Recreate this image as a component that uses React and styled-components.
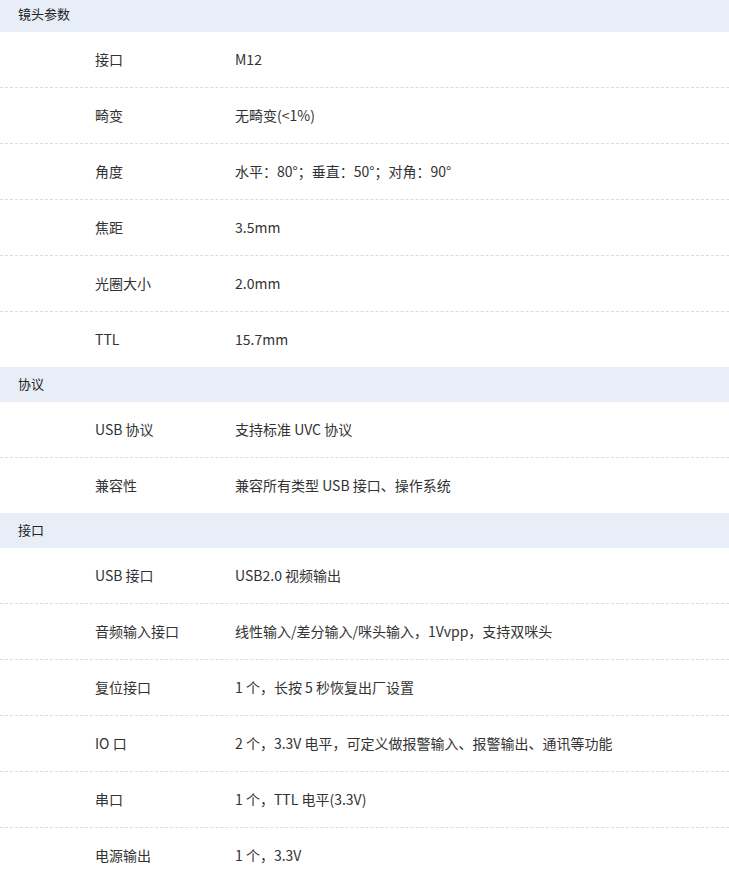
import React from "react";
import styled, { createGlobalStyle } from "styled-components";

const GlobalStyle = createGlobalStyle`
  html, body {
    margin: 0;
    padding: 0;
    background: #fff;
  }
  body {
    font-family: "Noto Sans CJK SC", "Noto Sans", sans-serif;
    font-size: 14px;
    color: #333;
    overflow: hidden;
  }
`;

const Table = styled.div`
  width: 729px;
  margin-top: -3px;
`;

const SectionTitle = styled.div`
  box-sizing: border-box;
  height: 35px;
  line-height: 33px;
  padding-left: 18px;
  background-color: #e8eef8;
  color: #222;
  font-size: 13px;
`;

const Row = styled.div`
  box-sizing: border-box;
  display: flex;
  align-items: center;
  height: ${props => (props.last ? "55px" : "56px")};
  padding-bottom: 2px;
  border-bottom: ${props => (props.last ? "none" : "1px dashed #dcdcdc")};
`;

const Label = styled.span`
  width: 140px;
  padding-left: 95px;
  flex-shrink: 0;
`;

const Value = styled.span`
  flex: 1;
`;

const sections = [
  {
    title: "镜头参数",
    rows: [
      ["接口", "M12"],
      ["畸变", "无畸变(<1%)"],
      ["角度", "水平：80°；垂直：50°；对角：90°"],
      ["焦距", "3.5mm"],
      ["光圈大小", "2.0mm"],
      ["TTL", "15.7mm"]
    ]
  },
  {
    title: "协议",
    rows: [
      ["USB 协议", "支持标准 UVC 协议"],
      ["兼容性", "兼容所有类型 USB 接口、操作系统"]
    ]
  },
  {
    title: "接口",
    rows: [
      ["USB 接口", "USB2.0 视频输出"],
      ["音频输入接口", "线性输入/差分输入/咪头输入，1Vvpp，支持双咪头"],
      ["复位接口", "1 个，长按 5 秒恢复出厂设置"],
      ["IO 口", "2 个，3.3V 电平，可定义做报警输入、报警输出、通讯等功能"],
      ["串口", "1 个，TTL 电平(3.3V)"],
      ["电源输出", "1 个，3.3V"]
    ]
  }
];

export default function App() {
  return (
    <>
      <GlobalStyle />
      <Table>
        {sections.map(section => (
          <div key={section.title}>
            <SectionTitle>{section.title}</SectionTitle>
            {section.rows.map(([label, value], i) => (
              <Row key={label} last={i === section.rows.length - 1}>
                <Label>{label}</Label>
                <Value>{value}</Value>
              </Row>
            ))}
          </div>
        ))}
      </Table>
    </>
  );
}
